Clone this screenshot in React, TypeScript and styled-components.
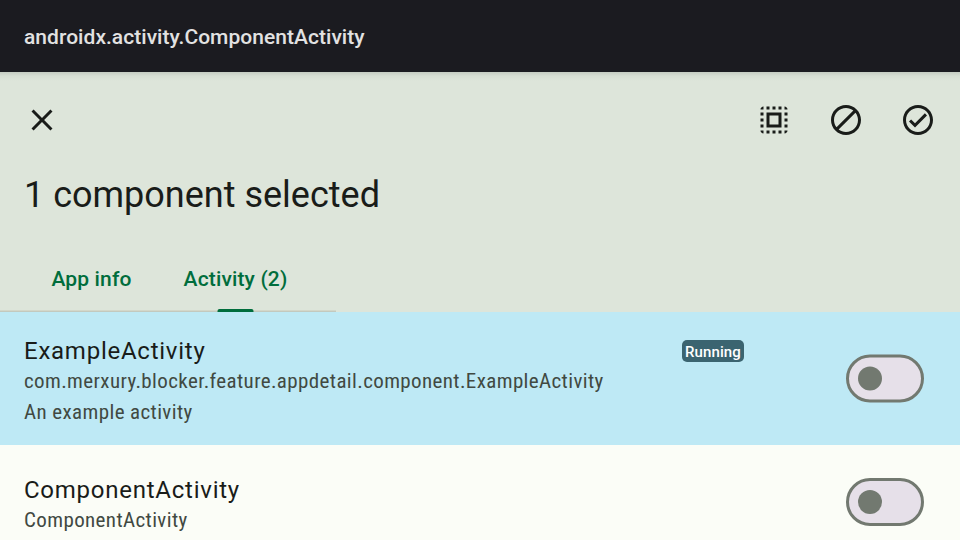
import React from "react";
import styled, { createGlobalStyle } from "styled-components";

const GlobalStyle = createGlobalStyle`
  *, *::before, *::after { box-sizing: border-box; }
  body { margin: 0; font-family: Roboto, "Liberation Sans", sans-serif; }
`;

const Screen = styled.div`
  width: 960px;
  height: 540px;
  overflow: hidden;
  display: flex;
  flex-direction: column;
  background: #fbfdf7;
  color: #191c19;
`;

const ActionBar = styled.header`
  flex: none;
  height: 72px;
  padding: 2px 24px 0;
  display: flex;
  align-items: center;
  background: #1b1b20;
  color: #e2e2e2;
  font-size: 21px;
  font-weight: 500;
  letter-spacing: 0.04px;
`;

const SelectionBar = styled.section`
  flex: none;
  height: 240px;
  display: flex;
  flex-direction: column;
  background: linear-gradient(rgba(0, 0, 0, 0.11), rgba(0, 0, 0, 0.03) 4px, transparent 9px) #dde5da;
`;

const Toolbar = styled.div`
  height: 96px;
  padding: 0 24px;
  display: flex;
  align-items: center;
  justify-content: space-between;
`;

const Actions = styled.div`
  display: flex;
  gap: 36px;
`;

const IconButton = styled.button`
  width: 36px;
  height: 36px;
  padding: 0;
  border: 0;
  background: none;
  color: inherit;

  svg { display: block; width: 36px; height: 36px; fill: currentColor; }
`;

const Headline = styled.h1`
  margin: 0;
  padding: 0 24px;
  height: 72px;
  line-height: 54px;
  font-size: 36px;
  font-weight: 400;
`;

const Tabs = styled.nav`
  width: 336px;
  height: 72px;
  display: flex;
  background: linear-gradient(to top, #c3c9be 1px, #d3d7ca 1px, #d3d7ca 2px, transparent 2px);
`;

const Tab = styled.div<{ $width: number }>`
  width: ${(p) => p.$width}px;
  height: 72px;
  display: flex;
  flex-direction: column;
  align-items: center;
  color: #006d3c;
  font-size: 21px;
  font-weight: 500;
  letter-spacing: 0.15px;
  line-height: 30px;
  padding-top: 24px;
`;

const Indicator = styled.span`
  width: 36px;
  height: 3px;
  margin-top: 15px;
  transform: translateX(-0.5px);
  border-radius: 2px 2px 0 0;
  background: #006d3c;
`;

const Row = styled.article<{ $selected?: boolean }>`
  flex: none;
  height: ${(p) => (p.$selected ? 133 : 114)}px;
  padding: ${(p) => (p.$selected ? 21 : 27)}px 36px 0 24px;
  display: flex;
  background: ${(p) => (p.$selected ? "#bee9f5" : "#fbfdf7")};
`;

const Details = styled.div`
  width: 720px;
`;

const TitleLine = styled.div`
  height: 33px;
  display: flex;
  align-items: flex-start;
  justify-content: space-between;
`;

const Title = styled.h2`
  margin: 0;
  font-size: 24px;
  font-weight: 400;
  line-height: 36px;
  letter-spacing: 0.75px;
`;

const Badge = styled.span`
  width: 62px;
  height: 22px;
  margin-top: 7px;
  border-radius: 5px;
  background: #3b6470;
  color: #fff;
  font-size: 15px;
  font-weight: 500;
  line-height: 24px;
  letter-spacing: 0.1px;
  text-align: center;
`;

const Caption = styled.p`
  margin: 0;
  color: #414942;
  font-family: "Roboto Condensed", Roboto, sans-serif;
  font-stretch: condensed;
  font-size: 21px;
  line-height: 30.5px;
  letter-spacing: 0.38px;
  white-space: nowrap;
`;

const Switch = styled.button<{ $top: number; $shift?: number }>`
  width: 78px;
  height: 48px;
  margin: ${(p) => p.$top}px 0 0 auto;
  padding: 0 9px;
  display: flex;
  align-items: center;
  border: 3px solid #727970;
  border-radius: 24px;
  background: #e6e0e9;
  transform: translateY(${(p) => p.$shift ?? 0}px);
`;

const Thumb = styled.span`
  width: 24px;
  height: 24px;
  border-radius: 50%;
  background: #727970;
`;

const icons = {
  close: "M19 6.41 17.59 5 12 10.59 6.41 5 5 6.41 10.59 12 5 17.59 6.41 19 12 13.41 17.59 19 19 17.59 13.41 12z",
  selectAll:
    "M3 5h2V3c-1.1 0-2 .9-2 2zm0 8h2v-2H3v2zm4 8h2v-2H7v2zM3 9h2V7H3v2zm10-6h-2v2h2V3zm6 0v2h2c0-1.1-.9-2-2-2zM5 21v-2H3c0 1.1.9 2 2 2zm-2-4h2v-2H3v2zM9 3H7v2h2V3zm2 18h2v-2h-2v2zm8-8h2v-2h-2v2zm0 8c1.1 0 2-.9 2-2h-2v2zm0-12h2V7h-2v2zm0 8h2v-2h-2v2zm-4 4h2v-2h-2v2zm0-16h2V3h-2v2zM7 17h10V7H7v10zm2-8h6v6H9V9z",
  block:
    "M12 2C6.48 2 2 6.48 2 12s4.48 10 10 10 10-4.48 10-10S17.52 2 12 2zM4 12c0-4.42 3.58-8 8-8 1.85 0 3.55.63 4.9 1.69L5.69 16.9C4.63 15.55 4 13.85 4 12zm8 8c-1.85 0-3.55-.63-4.9-1.69L18.31 7.1C19.37 8.45 20 10.15 20 12c0 4.42-3.58 8-8 8z",
  check:
    "M12 2C6.48 2 2 6.48 2 12s4.48 10 10 10 10-4.48 10-10S17.52 2 12 2zm0 18c-4.41 0-8-3.59-8-8s3.59-8 8-8 8 3.59 8 8-3.59 8-8 8zm4.59-12.42L10 14.17l-2.59-2.58L6 13l4 4 8-8z",
};

function Action({ name, label }: { name: keyof typeof icons; label: string }) {
  return (
    <IconButton aria-label={label}>
      <svg viewBox="0 0 24 24"><path d={icons[name]} /></svg>
    </IconButton>
  );
}

function Toggle({ top, shift }: { top: number; shift?: number }) {
  return (
    <Switch role="switch" aria-checked={false} $top={top} $shift={shift}>
      <Thumb />
    </Switch>
  );
}

export default function App() {
  return (
    <>
      <GlobalStyle />
      <Screen>
        <ActionBar>androidx.activity.ComponentActivity</ActionBar>
        <SelectionBar>
          <Toolbar>
            <Action name="close" label="Close" />
            <Actions>
              <Action name="selectAll" label="Select all" />
              <Action name="block" label="Block" />
              <Action name="check" label="Enable" />
            </Actions>
          </Toolbar>
          <Headline>1 component selected</Headline>
          <Tabs>
            <Tab $width={183}>App info</Tab>
            <Tab $width={105}>
              Activity (2)
              <Indicator />
            </Tab>
          </Tabs>
        </SelectionBar>
        <Row $selected>
          <Details>
            <TitleLine>
              <Title>ExampleActivity</Title>
              <Badge>Running</Badge>
            </TitleLine>
            <Caption>com.merxury.blocker.feature.appdetail.component.ExampleActivity</Caption>
            <Caption>An example activity</Caption>
          </Details>
          <Toggle top={22} shift={-0.5} />
        </Row>
        <Row>
          <Details>
            <TitleLine>
              <Title>ComponentActivity</Title>
            </TitleLine>
            <Caption>ComponentActivity</Caption>
          </Details>
          <Toggle top={6} />
        </Row>
      </Screen>
    </>
  );
}
